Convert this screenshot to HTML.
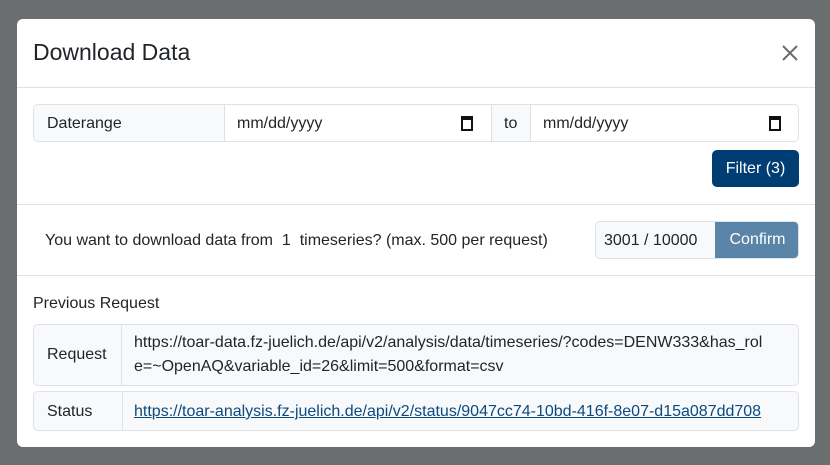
<!DOCTYPE html>
<html><head><style>
*{box-sizing:border-box;margin:0;padding:0}
body{width:830px;height:465px;background:#6b6e6e;font-family:"Liberation Sans",sans-serif;color:#212529;position:relative;overflow:hidden;font-size:16px}
.m{position:absolute;left:17px;top:19px;width:798px;height:428px;background:#fff;border-radius:6px}
.a{position:absolute;white-space:nowrap}
.box{position:absolute;border:1px solid #dee2e6;border-radius:5px;overflow:hidden}
.g{background:#f8f9fa}
</style></head><body>
<div class="m">
<div class="a" style="left:16px;top:20px;font-size:23px;color:#212529">Download Data</div>
<svg class="a" style="left:764px;top:25px" width="18" height="18" viewBox="0 0 18 18"><path d="M2 2L16 16M16 2L2 16" stroke="#6c6c6c" stroke-width="2"/></svg>
<div class="a" style="left:0;top:68px;width:798px;border-top:1px solid #dee2e6"></div>
<div class="box" style="left:16px;top:85px;width:766px;height:38px">
 <div class="a g" style="left:0;top:0;width:191px;height:36px;border-right:1px solid #dee2e6"></div>
 <div class="a" style="left:13px;top:10px">Daterange</div>
 <div class="a" style="left:203px;top:10px">mm/dd/yyyy</div>
 <div class="a" style="left:427px;top:11px;width:12px;height:15px;border:2px solid #111;border-top-width:4px"></div>
 <div class="a g" style="left:457px;top:0;width:40px;height:36px;border-left:1px solid #dee2e6;border-right:1px solid #dee2e6"></div>
 <div class="a" style="left:470px;top:10px">to</div>
 <div class="a" style="left:509px;top:10px">mm/dd/yyyy</div>
 <div class="a" style="left:735px;top:11px;width:12px;height:15px;border:2px solid #111;border-top-width:4px"></div>
</div>
<div class="a" style="left:695px;top:131px;width:87px;height:37px;background:#003d73;border-radius:5px;color:#fff;text-align:center;line-height:37px">Filter (3)</div>
<div class="a" style="left:0;top:185px;width:798px;border-top:1px solid #dee2e6"></div>
<div class="a" style="left:28px;top:213px">You want to download data from&nbsp; 1&nbsp; timeseries? (max. 500 per request)</div>
<div class="box g" style="left:578px;top:202px;width:204px;height:38px;border-radius:5px">
 <div class="a" style="left:8px;top:10px">3001 / 10000</div>
 <div class="a" style="left:119px;top:-1px;width:85px;height:38px;background:#5a84a8;color:#fff;text-align:center;line-height:38px">Confirm</div>
</div>
<div class="a" style="left:0;top:256px;width:798px;border-top:1px solid #dee2e6"></div>
<div class="a" style="left:16px;top:276px">Previous Request</div>
<div class="box" style="left:16px;top:305px;width:766px;height:62px">
 <div class="a g" style="left:0;top:0;width:88px;height:60px;border-right:1px solid #dee2e6"></div>
 <div class="a" style="left:13px;top:21px">Request</div>
 <div class="a g" style="left:88px;top:0;width:678px;height:60px"></div>
 <div class="a" style="left:100px;top:6px;line-height:24px">https://toar-data.fz-juelich.de/api/v2/analysis/data/timeseries/?codes=DENW333&amp;has_rol<br>e=~OpenAQ&amp;variable_id=26&amp;limit=500&amp;format=csv</div>
</div>
<div class="box g" style="left:16px;top:372px;width:766px;height:40px">
 <div class="a" style="left:88px;top:0;height:38px;border-left:1px solid #dee2e6"></div>
 <div class="a" style="left:13px;top:11px">Status</div>
 <div class="a" style="left:100px;top:11px;color:#0b4a80;text-decoration:underline">https://toar-analysis.fz-juelich.de/api/v2/status/9047cc74-10bd-416f-8e07-d15a087dd708</div>
</div>
</div>
</body></html>
